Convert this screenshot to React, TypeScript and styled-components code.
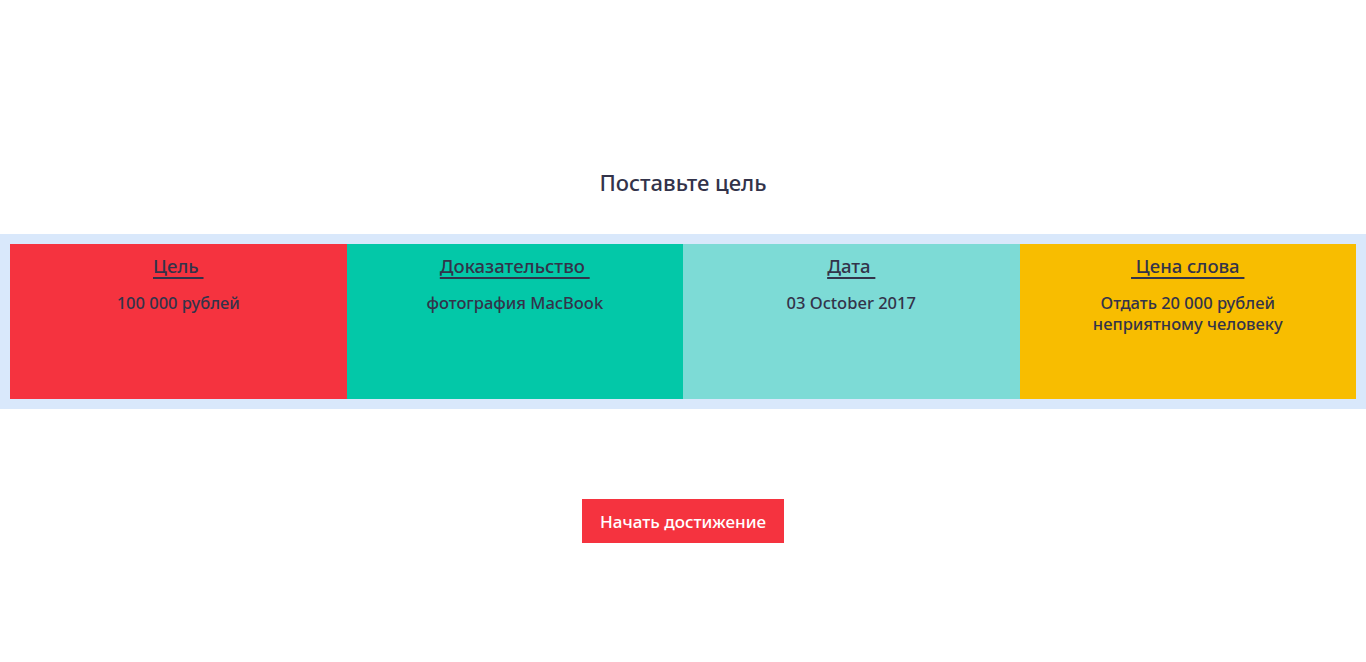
import React from "react";
import styled, { createGlobalStyle } from "styled-components";

const Global = createGlobalStyle`
  html, body { margin: 0; padding: 0; background: #fff; }
  body { font-family: "Noto Sans", "Open Sans", sans-serif; color: #33334a; }
`;

const Page = styled.main`
  display: flex;
  flex-direction: column;
  align-items: center;
  padding-top: 166px;
`;

const Heading = styled.h2`
  margin: 0;
  height: 32px;
  line-height: 32px;
  font-size: 22px;
  font-weight: 500;
  color: #33334a;
`;

const Band = styled.section`
  align-self: stretch;
  margin-top: 36px;
  padding: 10px;
  background: #d9e8fb;
  display: grid;
  grid-template-columns: repeat(4, 1fr);
`;

const Card = styled.div<{ $bg: string }>`
  background: ${(p) => p.$bg};
  height: 155px;
  box-sizing: border-box;
  padding-top: 10px;
  display: flex;
  flex-direction: column;
  align-items: center;
  text-align: center;
`;

const Title = styled.a`
  font-size: 18.5px;
  line-height: 24px;
  font-weight: 500;
  color: #33334a;
  text-decoration: underline;
  text-decoration-thickness: 2px;
  text-underline-offset: 4px;
  white-space: pre;
`;

const Text = styled.p`
  margin: 14px 0 0;
  font-size: 16.5px;
  line-height: 21px;
  font-weight: 500;
  color: #33334a;
`;

const Button = styled.button`
  margin-top: 90px;
  width: 202px;
  height: 44px;
  border: none;
  background: #f5333f;
  color: #fff;
  font-family: inherit;
  font-size: 17px;
  font-weight: 500;
  cursor: pointer;
`;

const cards = [
  { bg: "#f5333f", title: "Цель ", text: ["100 000 рублей"] },
  { bg: "#03c8a8", title: "Доказательство ", text: ["фотография MacBook"] },
  { bg: "#7ddbd6", title: "Дата ", text: ["03 October 2017"] },
  { bg: "#f8bd00", title: " Цена слова ", text: ["Отдать 20 000 рублей", "неприятному человеку"] },
];

export default function App() {
  return (
    <>
      <Global />
      <Page>
        <Heading>Поставьте цель</Heading>
        <Band>
          {cards.map((c) => (
            <Card key={c.title} $bg={c.bg}>
              <Title href="#">{c.title}</Title>
              <Text>
                {c.text.map((t, i) => (
                  <React.Fragment key={i}>
                    {i > 0 && <br />}
                    {t}
                  </React.Fragment>
                ))}
              </Text>
            </Card>
          ))}
        </Band>
        <Button>Начать достижение</Button>
      </Page>
    </>
  );
}
